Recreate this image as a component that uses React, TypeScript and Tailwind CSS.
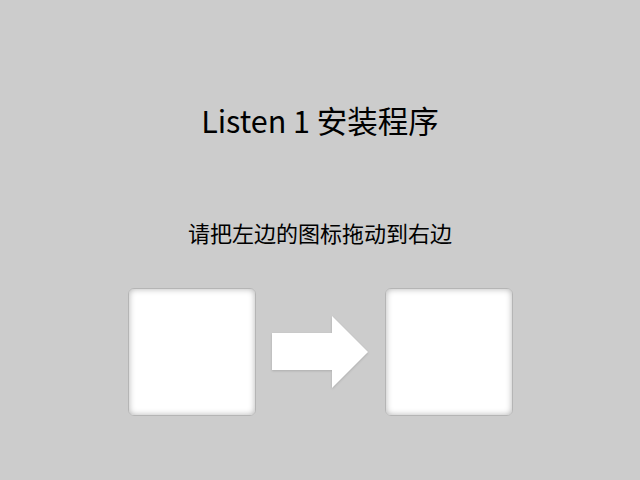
export default function App() {
  return (
    <div
      className="flex h-[480px] w-[640px] flex-col items-center bg-[#cccccc] text-black"
      style={{ fontFamily: '"Noto Sans CJK SC", "Noto Sans", sans-serif' }}
    >
      <h1 className="mt-[100px] h-[40px] text-[30.5px] leading-[40px]">Listen 1 安装程序</h1>
      <p className="mt-[78px] h-[28px] text-[22px] leading-[28px]">请把左边的图标拖动到右边</p>

      <div className="mt-[42px] flex items-center gap-4">
        <div className="h-[128px] w-[128px] rounded-[6px] border border-[#b5b5b5] bg-white shadow-[inset_0_0_6px_rgba(0,0,0,0.3)]" />
        <svg width="97" height="72" viewBox="0 0 97 72" className="drop-shadow-[0_1px_1px_rgba(0,0,0,0.15)]">
          <polygon points="0,17 60,17 60,0 96,36 60,72 60,54 0,54" fill="#ffffff" />
        </svg>
        <div className="h-[128px] w-[128px] rounded-[6px] border border-[#b5b5b5] bg-white shadow-[inset_0_0_6px_rgba(0,0,0,0.3)]" />
      </div>
    </div>
  )
}
